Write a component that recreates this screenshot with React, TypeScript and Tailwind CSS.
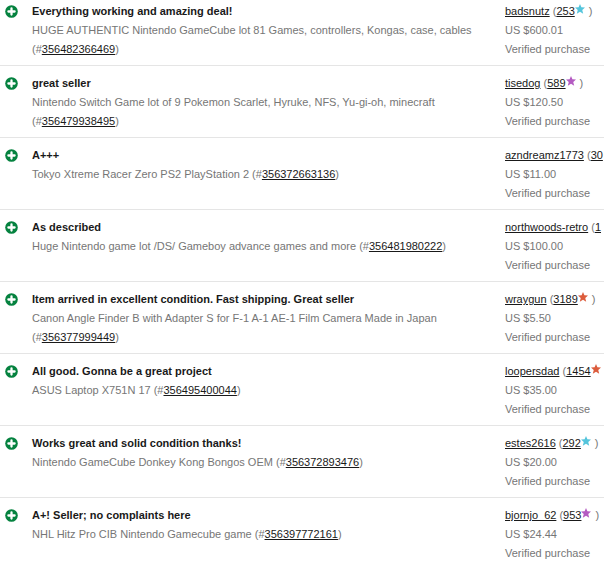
import React from 'react'

interface FeedbackType {
    comment: string
    item: string
    itemId: string
    buyer: string
    score: string
    star?: string
    price: string
}

const feedbacks: FeedbackType[] = [
    { comment: 'Everything working and amazing deal!', item: 'HUGE AUTHENTIC Nintendo GameCube lot 81 Games, controllers, Kongas, case, cables', itemId: '356482366469', buyer: 'badsnutz', score: '253', star: 'text-[#55c5dc]', price: 'US $600.01' },
    { comment: 'great seller', item: 'Nintendo Switch Game lot of 9 Pokemon Scarlet, Hyruke, NFS, Yu-gi-oh, minecraft', itemId: '356479938495', buyer: 'tisedog', score: '589', star: 'text-[#b45bc2]', price: 'US $120.50' },
    { comment: 'A+++', item: 'Tokyo Xtreme Racer Zero PS2 PlayStation 2', itemId: '356372663136', buyer: 'azndreamz1773', score: '30', price: 'US $11.00' },
    { comment: 'As described', item: 'Huge Nintendo game lot /DS/ Gameboy advance games and more', itemId: '356481980222', buyer: 'northwoods-retro', score: '1', price: 'US $100.00' },
    { comment: 'Item arrived in excellent condition. Fast shipping. Great seller', item: 'Canon Angle Finder B with Adapter S for F-1 A-1 AE-1 Film Camera Made in Japan', itemId: '356377999449', buyer: 'wraygun', score: '3189', star: 'text-[#dc5c3c]', price: 'US $5.50' },
    { comment: 'All good. Gonna be a great project', item: 'ASUS Laptop X751N 17', itemId: '356495400044', buyer: 'loopersdad', score: '1454', star: 'text-[#dc5c3c]', price: 'US $35.00' },
    { comment: 'Works great and solid condition thanks!', item: 'Nintendo GameCube Donkey Kong Bongos OEM', itemId: '356372893476', buyer: 'estes2616', score: '292', star: 'text-[#55c5dc]', price: 'US $20.00' },
    { comment: 'A+! Seller; no complaints here', item: 'NHL Hitz Pro CIB Nintendo Gamecube game', itemId: '356397772161', buyer: 'bjornjo_62', score: '953', star: 'text-[#b45bc2]', price: 'US $24.44' },
]

function PositiveIcon() {
    return (
        <svg viewBox="0 0 13 13" className="ml-[5px] mt-[3px] size-[13px]" role="img" aria-label="Positive feedback">
            <circle cx="6.5" cy="6.5" r="6.3" fill="#05823f" />
            <path d="M6.5 3.4v6.2M3.4 6.5h6.2" stroke="#fff" strokeWidth="2.3" strokeLinecap="round" />
        </svg>
    )
}

function StarIcon({ color }: { color: string }) {
    return (
        <svg viewBox="0 0 20 20" className={`mr-1 inline-block size-2.5 align-[1px] ${color}`} aria-hidden="true">
            <path fill="currentColor" d="M10 0l2.8 6.6 7.2.6-5.5 4.7 1.9 7.6L10 15.5l-6.4 4 1.9-7.6L0 7.2l7.2-.6z" />
        </svg>
    )
}

function FeedbackRow({ feedback }: { feedback: FeedbackType }) {
    return (
        <tr className="border-b border-[#e5e5e5] align-top last:border-b-0">
            <td className="pt-2 pb-1.5">
                <PositiveIcon />
            </td>
            <td className="pt-2 pr-4 pb-1.5">
                <p className="font-bold text-[#191919]">{feedback.comment}</p>
                <p>
                    {feedback.item} (#<a href="#" className="text-[#191919] underline">{feedback.itemId}</a>)
                </p>
            </td>
            <td className="pt-2 pb-1.5 whitespace-nowrap">
                <p className="h-[19px]">
                    <a href="#" className="text-[#191919] underline">{feedback.buyer}</a>
                    {' ('}
                    <a href="#" className="text-[#191919] underline">{feedback.score}</a>
                    {feedback.star !== undefined && (
                        <>
                            <StarIcon color={feedback.star} />
                            {')'}
                        </>
                    )}
                </p>
                <p>{feedback.price}</p>
                <p>Verified purchase</p>
            </td>
        </tr>
    )
}

function App() {
    return (
        <main className="h-screen overflow-hidden bg-white font-['Liberation_Sans',Arial,sans-serif] text-[11px] leading-[19px] text-[#767676]">
            {/* the list is scrolled a little way into its first row */}
            <table className="-mt-1.5 w-full table-fixed border-collapse">
                <colgroup>
                    <col className="w-8" />
                    <col />
                    <col className="w-[99px]" />
                </colgroup>
                <tbody>
                    {feedbacks.map(feedback => (
                        <FeedbackRow key={feedback.itemId} feedback={feedback} />
                    ))}
                </tbody>
            </table>
        </main>
    )
}

export default App
